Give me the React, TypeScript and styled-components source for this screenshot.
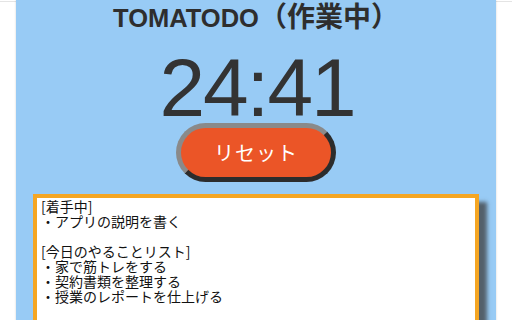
import styled, { createGlobalStyle } from "styled-components";

const GlobalStyle = createGlobalStyle`
  html, body {
    margin: 0;
    padding: 0;
    height: 100%;
  }
  body {
    background: linear-gradient(#ffffff 0 1px, #e4e4e4 1px 2px, #ffffff 2px);
    font-family: "Liberation Sans", "Noto Sans CJK JP", sans-serif;
  }
`;

const Panel = styled.main`
  width: 480px;
  min-height: 320px;
  margin: 0 auto;
  background-color: #98cbf5;
  box-shadow: 0 0 2px rgba(0, 0, 0, 0.18);
  display: flex;
  flex-direction: column;
  align-items: center;
  padding-top: 3px;
  box-sizing: border-box;
`;

const Title = styled.h1`
  margin: 0;
  font-family: "Liberation Sans", "Noto Sans CJK JP", sans-serif;
  font-size: 28px;
  line-height: 30px;
  font-weight: 700;
  color: #2e2e2e;
`;

const Brand = styled.span`
  font-size: 25.5px;
  line-height: 30px;
`;

const Timer = styled.div`
  margin-top: 20px;
  padding-left: 2px;
  font-family: "Liberation Sans", "Noto Sans CJK JP", sans-serif;
  font-size: 82px;
  line-height: 70px;
  letter-spacing: -2px;
  color: #333333;
`;

const ResetButton = styled.button`
  width: 160px;
  height: 59px;
  box-sizing: border-box;
  border: 5px solid;
  border-color: #8a8a8a #2c2c2c #2c2c2c #8a8a8a;
  border-radius: 30px;
  background-color: #eb5527;
  color: #ffffff;
  font-family: "Noto Sans CJK JP", sans-serif;
  font-size: 20px;
  letter-spacing: 1px;
  padding: 0;
  cursor: pointer;
`;

const TodoArea = styled.textarea`
  margin-top: 12px;
  width: 446px;
  height: 140px;
  box-sizing: border-box;
  border: 4px solid #f5a623;
  background-color: #ffffff;
  box-shadow: 8px 8px 4px rgba(60, 60, 60, 0.75);
  padding: 1px 4px;
  font-family: "Noto Sans CJK JP", sans-serif;
  font-size: 14px;
  line-height: 15px;
  color: #111111;
  resize: none;
  outline: none;
  overflow: hidden;
`;

const todoText = `[着手中]
・アプリの説明を書く

[今日のやることリスト]
・家で筋トレをする
・契約書類を整理する
・授業のレポートを仕上げる`;

export default function App() {
  return (
    <>
      <GlobalStyle />
      <Panel>
        <Title>
          <Brand>TOMATODO</Brand>（作業中）
        </Title>
        <Timer>24:41</Timer>
        <ResetButton>リセット</ResetButton>
        <TodoArea readOnly defaultValue={todoText} />
      </Panel>
    </>
  );
}
